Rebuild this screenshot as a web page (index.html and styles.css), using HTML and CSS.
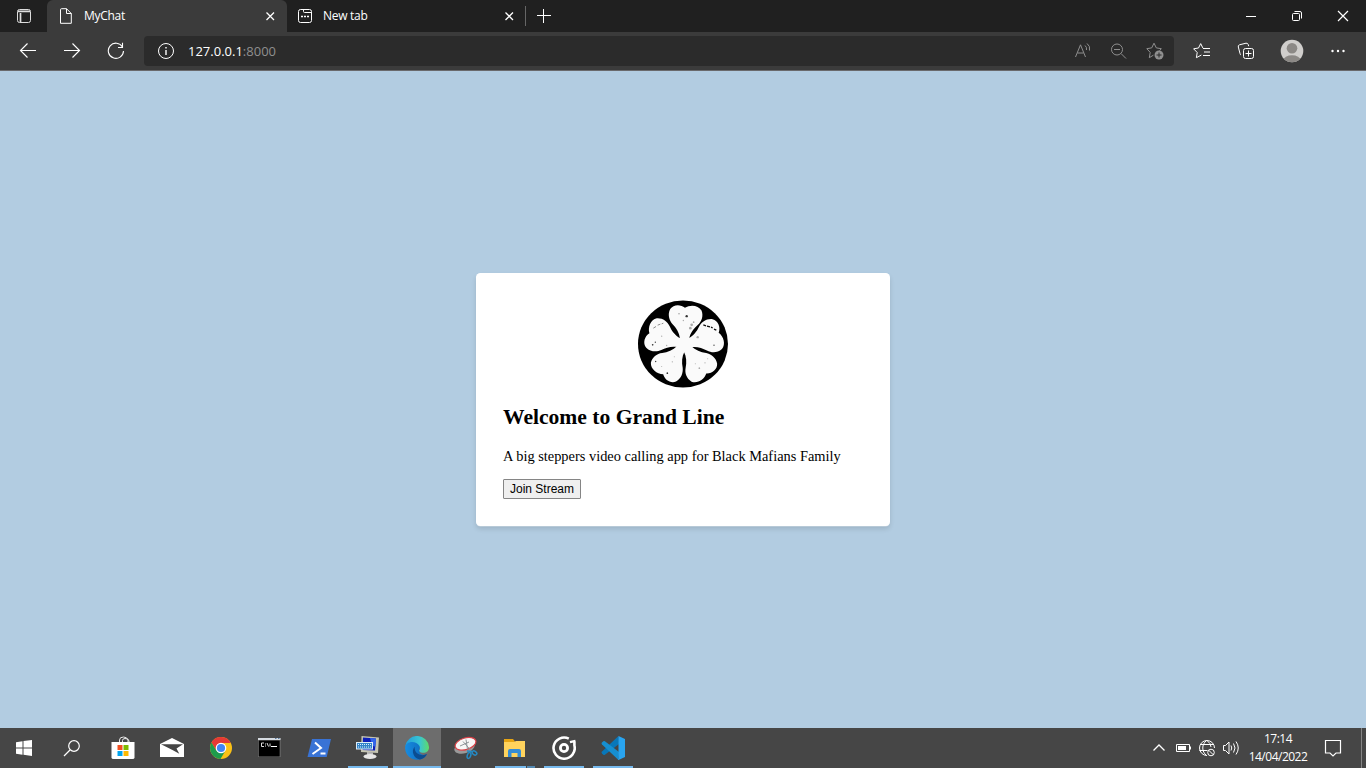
FILE: index.html
```html
<!DOCTYPE html>
<html lang="en">
<head>
<meta charset="utf-8">
<title>MyChat</title>
<link rel="stylesheet" href="styles.css">
</head>
<body>
<header class="tabs">
  <div class="tab-actions"><svg class="line" width="16" height="16" viewBox="0 0 16 16"><rect x="1.500" y="1.500" width="13" height="13" rx="2"/><path d="M2 3.300h12M4.500 5v9" stroke-width="1.700"/></svg></div>
  <div class="tab active">
    <svg class="line" width="16" height="16" viewBox="0 0 16 16"><path d="M3.500.7h5L13.300 5.500v9.800H2.500V1.700q0-1 1-1zM8.500.7v4.800h4.800"/></svg>
    <span class="tab-title">MyChat</span>
    <svg class="line" width="10" height="10" viewBox="0 0 10 10"><path d="M1.500 1.500l7.500 7.500M9 1.500L1.500 9" stroke-width="1.300"/></svg>
  </div>
  <div class="tab">
    <svg class="line" width="16" height="16" viewBox="0 0 16 16"><rect x="1.500" y="1.500" width="13" height="13" rx="2"/><path d="M6.500 1.500v2q0 1 1 1h7"/><path d="M4 8.500h2M7 8.500h2M10 8.500h2" stroke-width="1.500"/></svg>
    <span class="tab-title">New tab</span>
    <svg class="line" width="10" height="10" viewBox="0 0 10 10"><path d="M1.500 1.500l7.500 7.500M9 1.500L1.500 9" stroke-width="1.300"/></svg>
  </div>
  <div class="new-tab"><svg class="line" width="16" height="16" viewBox="0 0 16 16"><path d="M1 7.500h14M7.500 1v14"/></svg></div>
  <div class="window-controls">
    <span><svg class="line" width="12" height="12" viewBox="0 0 12 12"><path d="M1 6.500h10"/></svg></span>
    <span><svg class="line" width="12" height="12" viewBox="0 0 12 12"><rect x="1.500" y="3.500" width="7" height="7" rx="1"/><path d="M3.500 1.500H9q1.500 0 1.500 1.500v5.500"/></svg></span>
    <span><svg class="line" width="12" height="12" viewBox="0 0 12 12"><path d="M1 1l10 10M11 1L1 11" stroke-width="1.200"/></svg></span>
  </div>
</header>
<nav class="toolbar">
  <span class="tool"><svg class="line" width="18" height="18" viewBox="0 0 18 18"><path d="M17 8.500H1.500M8.500 1.500l-7 7 7 7" stroke-width="1.150"/></svg></span>
  <span class="tool"><svg class="line" width="18" height="18" viewBox="0 0 18 18"><path d="M1 8.500h15.500M9.500 1.500l7 7-7 7" stroke-width="1.150"/></svg></span>
  <span class="tool"><svg class="line" width="18" height="18" viewBox="0 0 18 18"><path d="M15.500 5A7.600 7.600 0 1 0 16.500 9M15.500.8V5.500H11" stroke-width="1.100"/></svg></span>
  <div class="address">
    <svg class="line" width="18" height="18" viewBox="0 0 18 18"><circle cx="9" cy="9" r="7.500"/><path d="M9 8v5M9 5v1.500" stroke-width="1.400"/></svg>
    <span class="url">127.0.0.1<span class="port">:8000</span></span>
    <div class="address-icons">
      <svg class="line" width="18" height="18" viewBox="0 0 18 18"><path d="M1.500 15L6.500 2.800 11.500 15M3.500 11h6M11 3.500q2 1.500 1.500 4.500M13 1.500q3.500 2.500 2.500 7"/></svg>
      <svg class="line" width="18" height="18" viewBox="0 0 18 18"><circle cx="7" cy="7.500" r="5.500"/><path d="M4 7.500h6M11 11.500l5 5"/></svg>
      <svg class="line" width="18" height="18" viewBox="0 0 18 18"><path d="M7.500 13.100l-4.200 2.600.9-5.300L.8 6.700l4.900-.8L8 1.200l2.300 4.700 5 .8-1.700 1.900"/><circle cx="13" cy="13" r="4.500" fill="#8f8f8f" stroke="none"/><path d="M10.500 13h5M13 10.500v5" stroke="#2b2b2b"/></svg>
    </div>
  </div>
  <div class="actions">
    <svg class="line" width="18" height="18" viewBox="0 0 18 18"><path d="M10 5.900h-.2L7.700 1.600 5.500 6l-4.900.8L4.200 10.500l-.8 5.200 5-2.700M10 6.500h7M11 10h6M10 13.500h7"/></svg>
    <svg class="line" width="18" height="18" viewBox="0 0 18 18"><rect x="6.500" y="6.500" width="10" height="10" rx="2"/><path d="M8.500 11.500h6M11.500 8.500v6M4 13q-.8-.3-1-1.500L1.300 5q-.4-1.700 1.200-2.200L9 1.200q1.700-.3 2.300 1.500l.4 1.500"/></svg>
    <svg width="24" height="24" viewBox="0 0 24 24"><clipPath id="avatar"><circle cx="12" cy="12" r="11.300"/></clipPath><g clip-path="url(#avatar)"><path fill="#d0cecc" d="M0 0h24v24H0z"/><circle cx="12" cy="9.300" r="5.300" fill="#8c8986"/><ellipse cx="12" cy="21.300" rx="8.500" ry="5" fill="#8c8986"/></g></svg>
    <svg width="18" height="18" viewBox="0 0 18 18" fill="#fff"><circle cx="3.500" cy="9" r="1.200"/><circle cx="9" cy="9" r="1.200"/><circle cx="14.500" cy="9" r="1.200"/></svg>
  </div>
</nav>
<main class="page">
  <section class="card">
    <svg class="logo" width="90" height="88" viewBox="24 13.500 270 264">
      <defs><path id="petal" d="M-13 4L-14-17C-16-33-26-48-38-59C-48-70-54-88-46-104C-37-119-15-120-2-109C13-120 38-119 48-103C55-87 50-70 38-59C26-48 16-33 14-17L13 4Z"/></defs>
      <ellipse cx="159" cy="145.500" rx="135" ry="130.500"/>
      <g fill="#fafafa">
        <use href="#petal" transform="translate(163 146) rotate(2)"/>
        <use href="#petal" transform="translate(163 147) rotate(72)"/>
        <use href="#petal" transform="translate(163 147) rotate(144)"/>
        <use href="#petal" transform="translate(162 147) rotate(216)"/>
        <use href="#petal" transform="translate(162 147) rotate(289)"/>
        <circle cx="163" cy="147" r="20"/>
      </g>
      <path d="M220 88l8 3M231 92l9 2M243 95l5 2M252 101l7 3" stroke="#111" stroke-width="4"/>
      <path d="M70 98l8-5M83 89l8-3M95 85l5-2" stroke="#555" stroke-width="2"/>
      <g fill="#333"><circle cx="170" cy="62" r="3.500"/><circle cx="68" cy="148" r="2.500"/><circle cx="76" cy="140" r="2"/><circle cx="112" cy="233" r="2.500"/><circle cx="77" cy="198" r="2"/><circle cx="147" cy="55" r="1.500"/><circle cx="252" cy="149" r="2"/></g>
      <g fill="#aaa"><circle cx="185" cy="88" r="4"/><circle cx="181" cy="98" r="4"/><circle cx="191" cy="80" r="2.500"/><circle cx="203" cy="125" r="3.500"/><circle cx="95" cy="122" r="2"/><circle cx="110" cy="150" r="2"/><circle cx="225" cy="202" r="2"/><circle cx="208" cy="218" r="2.500"/><circle cx="196" cy="205" r="1.500"/><circle cx="127" cy="199" r="2"/><circle cx="133" cy="184" r="1.500"/><circle cx="233" cy="190" r="1.500"/><circle cx="95" cy="213" r="1.500"/><circle cx="160" cy="75" r="2"/></g>
    </svg>
    <h2 class="title">Welcome to Grand Line</h2>
    <p class="lead">A big steppers video calling app for Black Mafians Family</p>
    <button class="join">Join Stream</button>
  </section>
</main>
<footer class="taskbar">
  <div class="item"><svg width="16" height="16" viewBox="0 0 16 16" fill="#fff"><path d="M0 2.200l6.500-.9v6.200H0zM7.500 1.100L16 0v7.500H7.500zM0 8.500h6.500v6.200L0 13.800zM7.500 8.500H16V16l-8.500-1.200z"/></svg></div>
  <div class="item"><svg class="line" width="18" height="18" viewBox="0 0 18 18"><circle cx="11" cy="7" r="5.300" stroke-width="1.200"/><path d="M7 11l-6 6" stroke-width="1.300"/></svg></div>
  <div class="apps">
    <div class="item store"><svg width="24" height="24" viewBox="0 0 24 24"><path d="M8.500 7V4q0-3 4-3 3.500 0 4.500 3v3M11.500 7V4.500q0-2 2.500-2 4 0 4 2.500v2" fill="none" stroke="#e8e8e8"/><path d="M.5 6h23v15.500q0 1.500-2 1.500h-19q-2 0-2-1.500z" fill="#fff"/><path fill="#f25022" d="M6.500 9h5v5h-5z"/><path fill="#7fba00" d="M12.500 9h5v5h-5z"/><path fill="#00a4ef" d="M6.500 15h5v5h-5z"/><path fill="#ffb900" d="M12.500 15h5v5h-5z"/></svg></div>
    <div class="item"><svg width="24" height="24" viewBox="0 0 24 24"><path fill="#fff" d="M0 8l12-6 12 6v13H0z"/><path fill="#454545" d="M1 8.200h22l-6.500 4.300 2.800 5.300L12 13.700z"/></svg></div>
    <div class="item"><svg width="24" height="24" viewBox="0 0 24 24"><circle cx="12" cy="12" r="11" fill="#fbc116"/><path fill="#e53935" d="M2.500 6.500A11 11 0 0 1 21.800 7H12L7.300 14.500z"/><path fill="#1e9b4c" d="M2.500 6.500A11 11 0 0 0 11.500 23l5-8.500H7.300z"/><circle cx="12" cy="12" r="5.300" fill="#fff"/><circle cx="12" cy="12" r="4.100" fill="#4285f4"/></svg></div>
    <div class="item"><svg width="24" height="24" viewBox="0 0 24 24"><path fill="#777" d="M0 2h22.500v19H0z"/><path fill="#000" d="M.7 4.500h21v16h-21z"/><path fill="#d5dae0" d="M0 2h22.500v2H0z"/><path fill="#5a7ba0" d="M17 2h1.500v1H17zM20 2h1.500v1H20z"/><path d="M6 7H3.500v3.500H6M7.500 7.500v1M7.500 9.500v1M9 7l1.500 3.500M12 7.500v3" fill="none" stroke="#ddd"/><path d="M13 10.500h6" stroke="#fff"/></svg></div>
    <div class="item"><svg width="24" height="24" viewBox="0 0 24 24"><path fill="#3973d5" d="M5 3h19l-4.300 18H.5z"/><path d="M8 6.500l6 5.500-8.500 6M13.500 17.500h5" fill="none" stroke="#fff" stroke-width="2"/></svg></div>
    <div class="item running"><svg width="24" height="24" viewBox="0 0 24 24"><path fill="#c4c4b2" d="M5.500 0L23 1.500 22 17 5 16z"/><path fill="#0d1fb8" d="M7 1.500l13 1-1 12L6.500 14z"/><path fill="#3266ec" d="M14 2l6 .7-.6 8-3-1z"/><path fill="#bcbcbc" d="M11 16l6 .5v3h-6z"/><ellipse cx="14" cy="20.500" rx="6.500" ry="2.600" fill="#e6e6e6"/><path fill="#deedf7" d="M0 6h17v7.500H0z"/><path fill="#3283c8" d="M1 7h15v5.500H1z"/><path d="M2 8.500h13M2 11h13" stroke="#d9efff" stroke-dasharray="1 1"/></svg></div>
    <div class="item current"><svg width="24" height="24" viewBox="0 0 24 24"><defs><linearGradient id="edge-top"><stop stop-color="#229bd9"/><stop offset=".6" stop-color="#38c5d5"/><stop offset="1" stop-color="#5fdb68"/></linearGradient><linearGradient id="edge-low" x2="1"><stop stop-color="#178ce0"/><stop offset="1" stop-color="#0c63b8"/></linearGradient></defs><path fill="url(#edge-top)" d="M.2 10A12 12 0 0 1 24 11c.3 4-3 6.300-6.500 5.800-3-.3-4-1.500-3-3 2-4-7-8-14.300-3.800z"/><path fill="url(#edge-low)" d="M.1 12C.2 5 11 4 14.500 10c.7 2 0 3-.5 4.500.5 4 4 5.500 8 3.500C19 24 12 25 7 22.700A12 12 0 0 1 .1 12z"/><path fill="#0b4d91" d="M9.700 10.800c-4 4-1 12 5.300 12.700 3-.6 5.500-2.500 7-5.500-5.500 3-13 0-12.300-7.200z"/></svg></div>
    <div class="item"><svg width="24" height="24" viewBox="0 0 24 24"><ellipse cx="10.500" cy="11.500" rx="10.500" ry="5.800" fill="#999" transform="rotate(-17 10.500 11.500)"/><ellipse cx="11.500" cy="7.800" rx="10.700" ry="5.800" fill="#f7f7f7" stroke="#d84248" stroke-width="1.200" transform="rotate(-17 11.500 7.800)"/><path d="M6 10l9-4M12 3.500l1.500 10M9 5.500l8 9" stroke="#8e959a" fill="none"/><path d="M13 15l5 .5" stroke="#258ac4" stroke-width="1.700"/><ellipse cx="15" cy="19.500" rx="1.700" ry="3" fill="none" stroke="#258ac4" stroke-width="1.500" transform="rotate(18 15 19.500)"/><ellipse cx="20.500" cy="17" rx="2.500" ry="1.800" fill="none" stroke="#258ac4" stroke-width="1.500" transform="rotate(35 20.500 17)"/></svg></div>
    <div class="item running grouped"><svg width="24" height="24" viewBox="0 0 24 24"><path fill="#e7a514" d="M1 3h9l2 2.500V9H1z"/><path fill="#ffd35d" d="M1 6h10l2-1h9v16H1z"/><path fill="#348cd5" d="M5 21v-6q0-2 2-2h9q2 0 2 2v6h-3.500v-4h-6v4z"/></svg></div>
    <div class="item running"><svg width="24" height="24" viewBox="0 0 24 24" fill="none" stroke="#fff"><path d="M16.800 2.600A10.600 10.600 0 1 0 22.400 9.500V6" stroke-width="2.600"/><circle cx="12" cy="12" r="3.600" stroke-width="2.800"/><path d="M18 6.200l5.500-1.400" stroke-width="2.400"/></svg></div>
    <div class="item running"><svg width="24" height="24" viewBox="0 0 24 24"><path fill="#0877b9" d="M17.500 0L1 15.500q-1 1 0 2l1.300 1.200q.8.500 1.600 0L18 8z"/><path fill="#168fd1" d="M17.500 24L1 8.500q-1-1 0-2l1.300-1.200q.8-.5 1.600 0L18 16z"/><path fill="#29a4ef" d="M17.500 0L24 3v18l-6.500 3q-1-.5 0-1.500z"/></svg></div>
  </div>
  <div class="tray">
    <svg class="line" width="14" height="14" viewBox="0 0 14 14"><path d="M1.500 9.500L7 4l5.500 5.500" stroke-width="1.300"/></svg>
    <svg class="battery" width="16" height="16" viewBox="0 0 16 16"><path d="M.5 4.500h13v7H.5zM14.500 6.500v3" fill="none" stroke="#fff"/><path d="M2 6h8v4H2z" fill="#fff"/></svg>
    <svg class="line globe" width="18" height="18" viewBox="0 0 18 18"><path d="M9 16.500A7.500 7.500 0 1 1 16.500 9M8.500 1.500c-5 4-5 11 0 15M9 1.500q4 3 4 6.500M2 5.500h13.500M1.500 11.500h8"/><circle cx="13" cy="13.500" r="3.300"/><path d="M10.700 11.200l4.600 4.600"/></svg>
    <svg class="line" width="18" height="18" viewBox="0 0 18 18"><path d="M1.500 6.500h2L7 3v12l-3.500-3.500h-2zM9 6.500q1.500 2.500 0 5M11.500 4.500q3 4.500 0 9M14 2.500q4.500 6.500 0 13"/></svg>
    <div class="clock"><span class="time">17:14</span><span class="date">14/04/2022</span></div>
    <svg class="line notices" width="18" height="18" viewBox="0 0 18 18"><path d="M1.500 1.500h15v12.500H12l-3 3-3-3H1.500z" stroke-width="1.200"/></svg>
    <div class="show-desktop"></div>
  </div>
</footer>
</body>
</html>
```
FILE: styles.css
```css
* { box-sizing: border-box; }
body {
  margin: 0;
  width: 1366px;
  height: 768px;
  overflow: hidden;
  display: flex;
  flex-direction: column;
  color: #fff;
  font-family: "Open Sans", "Noto Sans", sans-serif;
  font-size: 12px;
}
svg { display: block; flex: none; }
.line { fill: none; stroke: currentColor; stroke-width: 1; }

.tabs { display: flex; height: 32px; flex: none; background: #202020; }
.tab-actions { width: 47px; display: grid; place-items: center; padding-left: 1px; color: #ddd; }
.tab { display: flex; align-items: center; width: 238px; padding: 0 11px 0 10px; }
.tab.active { width: 240px; padding: 0 12px 0 11px; background: #3b3b3b; border-radius: 6px 6px 0 0; }
.tab-title { flex: 1; margin: -1px 0 0 10px; letter-spacing: -.28px; }
.new-tab { display: flex; align-items: center; height: 20px; margin-top: 6px; padding-left: 10px; border-left: 1px solid #666; }
.window-controls { display: flex; margin-left: auto; }
.window-controls span { width: 46px; display: grid; place-items: center; }

.toolbar { display: flex; align-items: center; height: 39px; flex: none; padding: 0 19px 0 6px; background: #3b3b3b; border-bottom: 1px solid #69696c; }
.tool { width: 44px; display: grid; place-items: center; }
.address { display: flex; align-items: center; width: 1030px; height: 30px; margin-left: 6px; padding: 0 10px 0 13px; border-radius: 4px; background: #2b2b2b; }
.url { margin: -1px 0 0 13px; font-size: 13px; }
.port { color: #8f8f8f; }
.address-icons { display: flex; gap: 18px; margin-left: auto; color: #8f8f8f; }
.actions { display: flex; align-items: center; margin-left: auto; gap: 26px; }
.actions svg:nth-child(3) { margin: 0 -1px 0 -1px; }

.page { flex: 1; display: grid; place-items: center; background: #b2cce1; color: #000; }
.card {
  display: flex;
  flex-direction: column;
  align-items: flex-start;
  width: 414px;
  height: 253px;
  padding: 27px;
  border-radius: 4.5px;
  background: #fff;
  box-shadow: 0 .5px 0 rgba(255, 255, 255, .5), 0 3px 5px rgba(0, 0, 0, .12);
}
.logo { align-self: center; }
.title { margin: 17px 0 0; font: bold 21.6px/25px "Liberation Serif", serif; }
.lead { margin: 18px 0 0; font: 14.4px/17px "Liberation Serif", serif; }
.join { width: 78px; height: 20px; margin: 14px 0 0; padding: 1px 0 0; border: 1px solid #858585; border-radius: 1px; background: #efefef; font: 12px/15px "Liberation Sans", sans-serif; white-space: nowrap; }

.taskbar { display: flex; height: 40px; flex: none; background: #464646; }
.item { position: relative; display: grid; place-items: center; width: 48px; height: 40px; }
.store { padding-right: 1px; }
.apps { display: flex; gap: 1px; margin-left: 3px; }
.current { background: #6d6d6d; }
.running::after, .current::after { content: ""; position: absolute; left: 4px; right: 4px; bottom: 0; height: 2px; background: #76b9ed; }
.current::after { left: 0; right: 0; }
.grouped::after { background: linear-gradient(90deg, #76b9ed 31px, #464646 31px, #464646 32px, #5489b2 32px); }
.tray { display: flex; align-items: center; margin-left: auto; }
.battery { margin-left: 10px; }
.globe { margin: 0 6px; }
.clock { display: flex; flex-direction: column; align-items: center; width: 60px; margin-left: 8px; line-height: 18px; white-space: nowrap; }
.time { letter-spacing: -.5px; }
.date { letter-spacing: -.5px; }
.notices { margin: 0 19px 0 16px; }
.show-desktop { width: 5px; height: 40px; border-left: 1px solid #858585; }
```
